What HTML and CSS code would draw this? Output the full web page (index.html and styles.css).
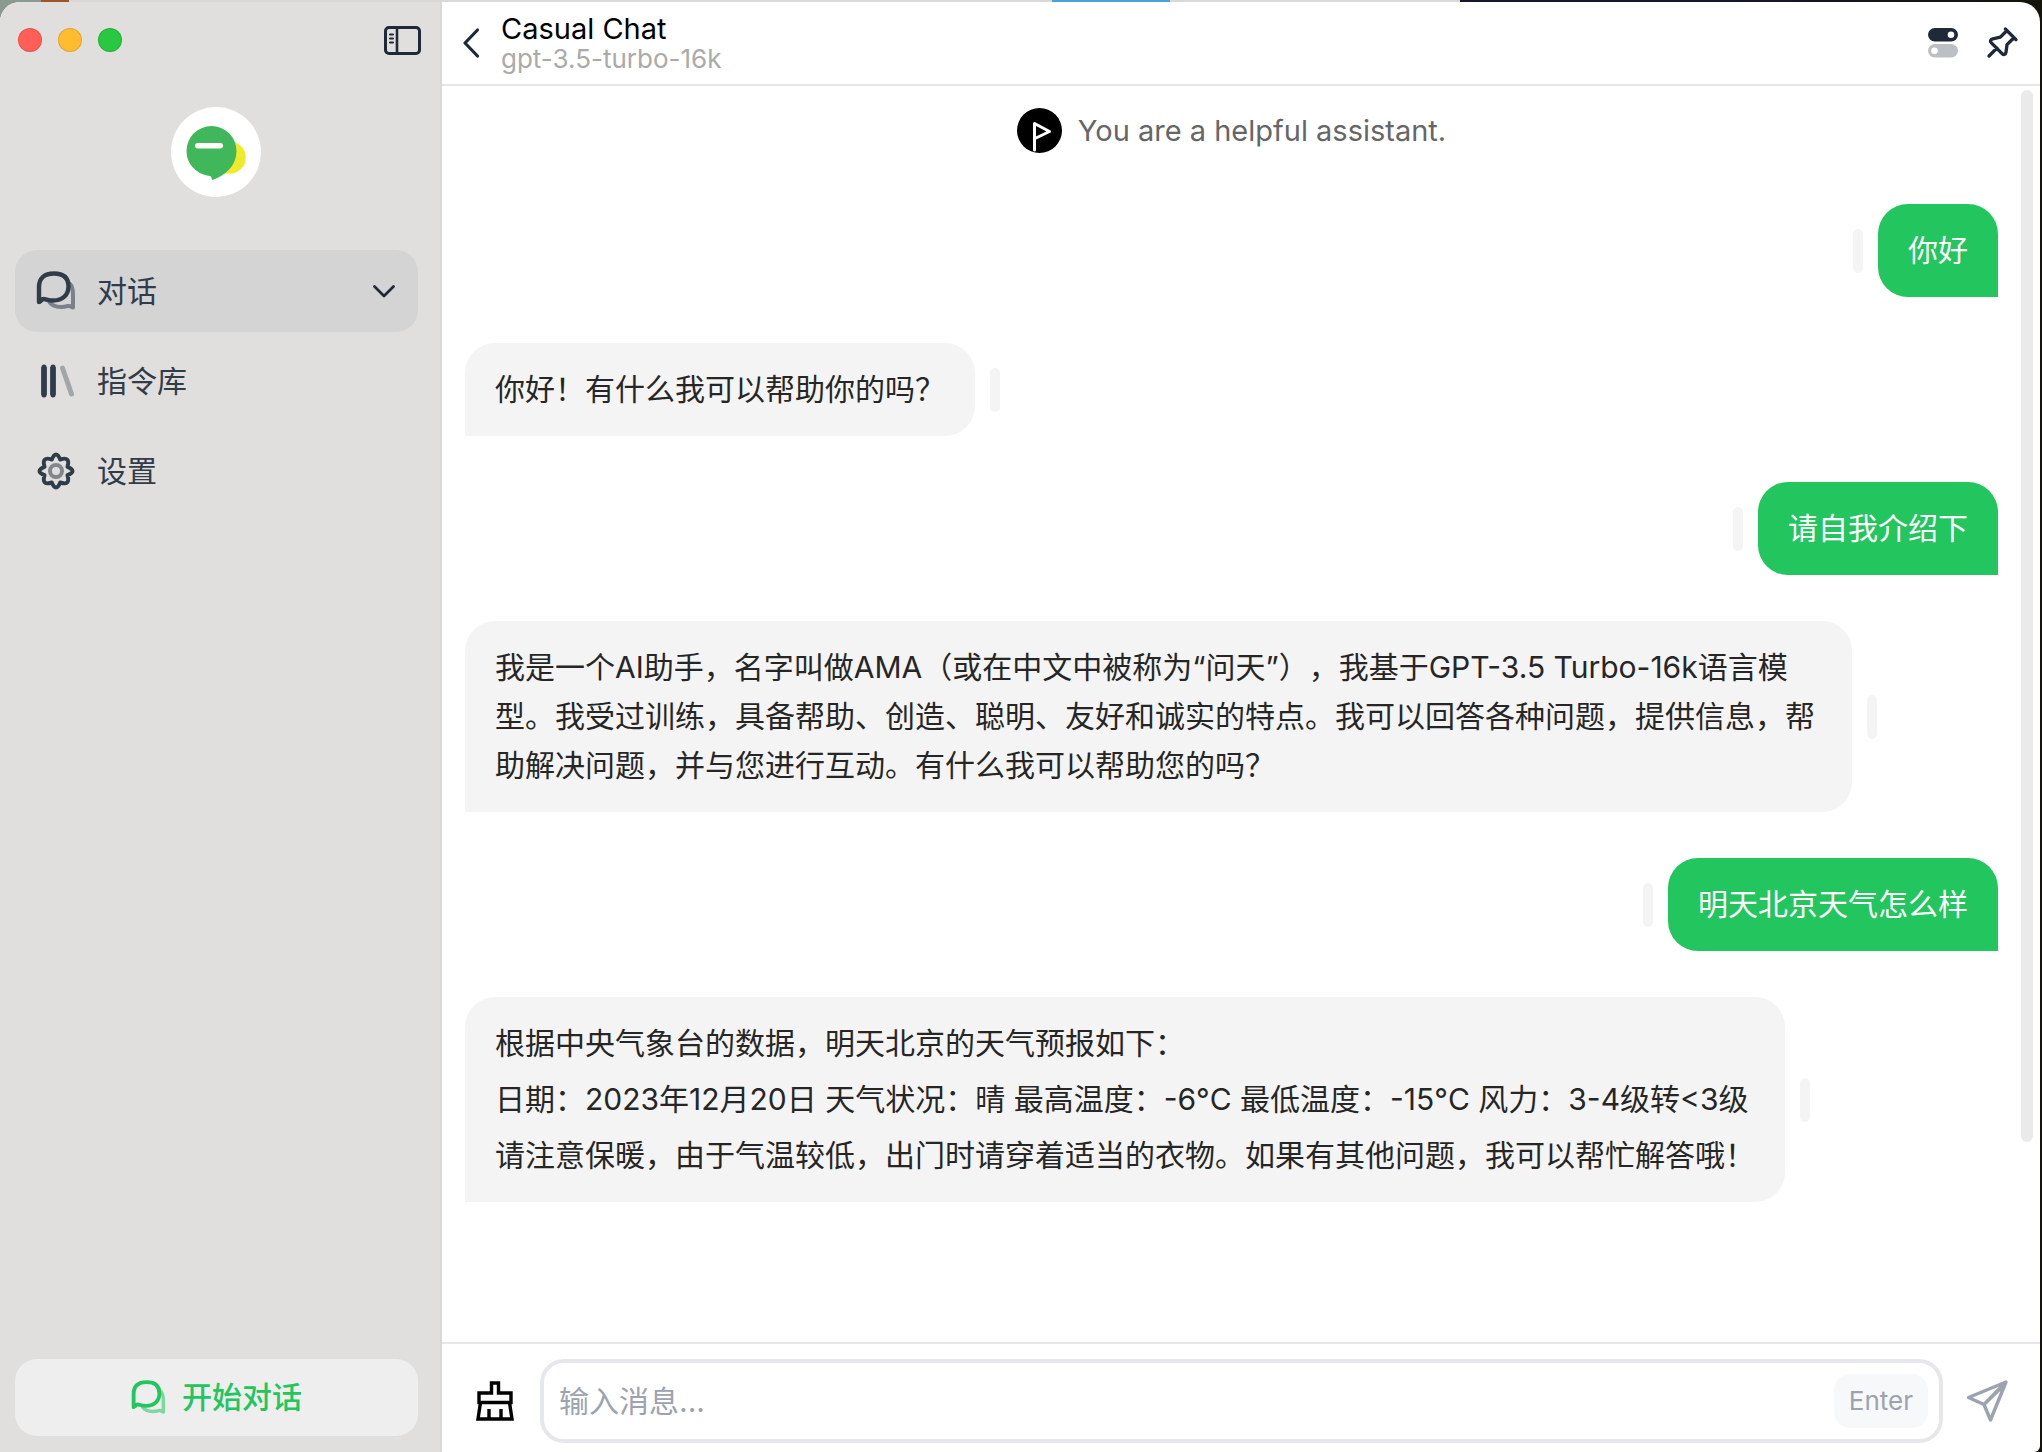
FILE: index.html
```html
<!DOCTYPE html>
<html lang="zh-CN">
<head>
<meta charset="utf-8">
<meta name="viewport" content="width=device-width, initial-scale=1">
<title>Casual Chat</title>
<link rel="stylesheet" href="styles.css">
</head>
<body>
<svg class="sprite" aria-hidden="true">
  <symbol id="icon-chat" viewBox="0 0 40 40">
    <path d="M34 13c3 3 3 6 3 10v13.500c-1.500 0-2-2-5-1.500-2 .5-4 1-7 1-6 0-10-2-12-5.500" fill="none" stroke="currentColor" stroke-width="4" stroke-linecap="round" stroke-linejoin="round" opacity=".55"/>
    <path d="M3 31V16C3 7.500 8 2.500 18 2.500S32.500 7.500 32.500 15.500 27 29.500 17 29.500c-5 0-7-1.500-9.500-1.500C5.500 28 4.500 31 3 31z" fill="none" stroke="currentColor" stroke-width="4.400" stroke-linecap="round" stroke-linejoin="round"/>
  </symbol>
</svg>
<div class="window">
  <aside class="sidebar">
    <div class="titlebar">
      <div class="lights">
        <button class="light light-close" aria-label="关闭"></button>
        <button class="light light-min" aria-label="最小化"></button>
        <button class="light light-max" aria-label="最大化"></button>
      </div>
      <button class="icon-button" aria-label="切换侧栏">
        <svg width="37" height="29" viewBox="0 0 37 29" fill="none" stroke="#1f2937" stroke-linecap="round">
          <rect x="1.500" y="1.500" width="34" height="26" rx="3.500" stroke-width="3"/>
          <path d="M13 2v25" stroke-width="2.600"/>
          <path d="M6 8.500h3M6 12.500h3M6 16.500h3" stroke-width="2"/>
        </svg>
      </button>
    </div>
    <div class="avatar">
      <svg width="90" height="90" viewBox="0 0 90 90">
        <circle cx="58.500" cy="50.500" r="16.300" fill="#f0ea2c"/>
        <path d="M40.500 19A25 25 0 0 1 65.500 44C65.500 58 55 68.500 41.500 73c-1-1-1-2-1.500-3.500-1-.6-2-.7-3-.8A25 25 0 0 1 15.500 44 25 25 0 0 1 40.500 19z" fill="#41b75b"/>
        <rect x="24" y="36" width="28" height="5.500" rx="2.700" fill="#fff"/>
      </svg>
    </div>
    <nav class="nav">
      <a class="nav-item nav-active" href="#chat">
        <svg class="nav-icon" width="40" height="40"><use href="#icon-chat"/></svg>
        <span class="nav-label">对话</span>
        <svg width="24" height="24" viewBox="0 0 24 24" fill="none" stroke="#1f2937" stroke-width="2.800" stroke-linecap="round" stroke-linejoin="round"><path d="M2.500 7.500L12 17l9.500-9.500"/></svg>
      </a>
      <a class="nav-item" href="#prompts">
        <svg class="nav-icon" width="40" height="40" viewBox="0 0 40 40" fill="none" stroke="currentColor" stroke-width="5" stroke-linecap="round">
          <path d="M8 6v28M17 6v28" stroke-width="5.500" stroke-linecap="butt"/>
          <path d="M8 6v28M17 6v28"/>
          <path d="M26.500 7L35.500 33" opacity=".35"/>
        </svg>
        <span class="nav-label">指令库</span>
      </a>
      <a class="nav-item" href="#settings">
        <svg class="nav-icon" width="40" height="40" viewBox="0 0 40 40" fill="none" stroke="currentColor" stroke-width="4" stroke-linejoin="round">
          <path d="M15.800 8.500Q20 -1.500 24.200 8.500Q34.600 5 31.500 15.800Q41.500 20 31.500 24.200Q34.600 35 24.200 31.500Q20 41.500 15.800 31.500Q5.400 35 8.500 24.200Q-1.500 20 8.500 15.800Q5.400 5 15.800 8.500z"/>
          <circle cx="20" cy="20" r="6" opacity=".55"/>
        </svg>
        <span class="nav-label">设置</span>
      </a>
    </nav>
    <button class="start">
      <svg width="35" height="35"><use href="#icon-chat"/></svg>
      <span>开始对话</span>
    </button>
  </aside>

  <main class="main">
    <header class="header">
      <button class="icon-button" aria-label="返回">
        <svg width="22" height="32" viewBox="0 0 22 32" fill="none" stroke="#1f2937" stroke-width="3.200" stroke-linecap="round" stroke-linejoin="round"><path d="M17.500 3L5 16l12.500 13"/></svg>
      </button>
      <div class="heading">
        <h1 class="title">Casual Chat</h1>
        <p class="model">gpt-3.5-turbo-16k</p>
      </div>
      <button class="icon-button" aria-label="选项">
        <svg width="30" height="30" viewBox="0 0 30 30">
          <rect width="30" height="13.500" rx="6.750" fill="#1f2937"/>
          <circle cx="23" cy="6.750" r="3.300" fill="#fff"/>
          <rect y="16" width="30" height="13.500" rx="6.750" fill="#bcbfc4"/>
          <circle cx="6.500" cy="22.750" r="3.300" fill="#fff"/>
        </svg>
      </button>
      <button class="icon-button" aria-label="置顶">
        <svg width="40" height="40" viewBox="0 0 24 24" fill="none" stroke="#1f2937" stroke-width="2" stroke-linecap="round" stroke-linejoin="round"><path d="M15 4.500l-4 4-4.500 1c-1.500.5-1.800 1.500-1 2.300l6.700 6.700c1 .8 2 .3 2.200-1l.6-4.500 4-4M9 15l-4.800 4.800M14 3.600l6.400 6.400"/></svg>
      </button>
    </header>

    <div class="body">
      <section class="messages">
        <div class="system">
          <svg width="45" height="45" viewBox="0 0 45 45">
            <circle cx="22.500" cy="22.500" r="22.500"/>
            <path d="M17.500 42V15.500L32.500 23.500 19 30" fill="none" stroke="#fff" stroke-width="3" stroke-linejoin="round" stroke-linecap="round"/>
          </svg>
          <span>You are a helpful assistant.</span>
        </div>
        <div class="row row-user"><div class="bubble">你好</div><span class="handle"></span></div>
        <div class="row"><div class="bubble">你好！有什么我可以帮助你的吗？</div><span class="handle"></span></div>
        <div class="row row-user"><div class="bubble">请自我介绍下</div><span class="handle"></span></div>
        <div class="row"><div class="bubble">我是一个AI助手，名字叫做AMA（或在中文中被称为“问天”），我基于GPT-3.5 Turbo-16k语言模型。我受过训练，具备帮助、创造、聪明、友好和诚实的特点。我可以回答各种问题，提供信息，帮助解决问题，并与您进行互动。有什么我可以帮助您的吗？</div><span class="handle"></span></div>
        <div class="row row-user"><div class="bubble">明天北京天气怎么样</div><span class="handle"></span></div>
        <div class="row"><div class="bubble">
          <p>根据中央气象台的数据，明天北京的天气预报如下：</p>
          <p>日期：2023年12月20日 天气状况：晴 最高温度：-6°C 最低温度：-15°C 风力：3-4级转&lt;3级</p>
          <p>请注意保暖，由于气温较低，出门时请穿着适当的衣物。如果有其他问题，我可以帮忙解答哦！</p>
        </div><span class="handle"></span></div>
      </section>
      <div class="scrollbar"><div class="thumb"></div></div>
    </div>

    <footer class="composer">
      <button class="icon-button" aria-label="清空对话">
        <svg width="44" height="44" viewBox="0 0 44 44" fill="none" stroke="#000" stroke-width="3.400">
          <path d="M18.500 14V4h7v10h12.500v9.500h-32V14zM7.500 23.500L5 40h34l-2.500-16.500M16 30v10M28 30v10"/>
        </svg>
      </button>
      <div class="field">
        <input class="input" type="text" placeholder="输入消息..." aria-label="输入消息">
        <kbd class="key">Enter</kbd>
      </div>
      <button class="icon-button" aria-label="发送">
        <svg width="44" height="44" viewBox="0 0 44 44" fill="none" stroke="#9ca3af" stroke-width="3.400" stroke-linejoin="round">
          <path d="M41 3L3.500 18.500 19 25.500 25.500 41zM19 25.500L41 3M19 25.500L38 7"/>
        </svg>
      </button>
    </footer>
  </main>
</div>
</body>
</html>
```
FILE: styles.css
```css
* {
  box-sizing: border-box;
}

body {
  margin: 0;
  padding: 2px 2px 0 0;
  min-height: 100vh;
  display: flex;
  background: linear-gradient(90deg, #8a9a90 0 2%, #a0522d 2% 3.4%, #d8d8d4 3.4% 51.5%, #4aa3d8 51.5% 57.3%, #d8d8d4 57.3% 71.5%, #15172a 71.5% 85%, #15140a 100%);
  font-family: Inter, "Noto Sans CJK SC", sans-serif;
  font-size: 30px;
  line-height: 49px;
  color: #262626;
  text-spacing-trim: space-all;
}

h1,
p {
  margin: 0;
}

button {
  font: inherit;
  border: 0;
  padding: 0;
  background: none;
  cursor: pointer;
}

svg {
  display: block;
  flex: none;
}

.sprite {
  position: absolute;
  width: 0;
  height: 0;
}

.window {
  flex: 1;
  min-width: 0;
  display: grid;
  grid-template-columns: 442px minmax(0, 1fr);
  background: #fff;
  border-radius: 20px 20px 6px 0;
  overflow: hidden;
}

/* Sidebar */
.sidebar {
  display: flex;
  flex-direction: column;
  padding: 20px 22px 16px 15px;
  background: #e0dfdd;
  border-right: 2px solid #d8d8d8;
}

.titlebar {
  display: flex;
  align-items: center;
  justify-content: space-between;
  height: 36px;
  margin-right: -3px;
  padding-left: 3px;
}

.lights {
  display: flex;
  gap: 16px;
}

.light {
  width: 24px;
  height: 24px;
  border-radius: 50%;
  border: 1px solid rgba(0, 0, 0, 0.12);
}

.light-close {
  background: #ff5f57;
}

.light-min {
  background: #febc2e;
}

.light-max {
  background: #28c840;
}

.icon-button {
  display: flex;
  flex: none;
}

.avatar {
  align-self: center;
  margin: 49px 2px 53px 0;
  border-radius: 50%;
  background: #fff;
}

.nav {
  display: flex;
  flex-direction: column;
  gap: 8px;
}

.nav-item {
  display: flex;
  align-items: center;
  height: 82px;
  padding: 0 22px 0 21px;
  border-radius: 22px;
  color: #313c49;
  text-decoration: none;
}

.nav-active {
  background: #d4d4d4;
}

.nav-icon {
  margin-right: 21px;
}

.nav-label {
  flex: 1;
}

.start {
  display: flex;
  align-items: center;
  justify-content: center;
  gap: 16px;
  height: 77px;
  margin-top: auto;
  border-radius: 22px;
  background: #eee;
  color: #22c55e;
  font-weight: 500;
}

/* Conversation */
.main {
  display: flex;
  flex-direction: column;
  min-width: 0;
}

.header {
  display: flex;
  align-items: center;
  height: 84px;
  padding: 0 18px;
  border-bottom: 2px solid #e5e7eb;
}

.heading {
  flex: 1;
  padding-left: 19px;
}

.title {
  font-size: 29px;
  font-weight: 400;
  line-height: 32px;
  color: #000;
}

.model {
  font-size: 26px;
  line-height: 28px;
  color: #aaa;
}

.header .icon-button:nth-last-child(2) {
  margin-right: 24px;
}

.body {
  flex: 1;
  display: flex;
}

.messages {
  flex: 1;
  min-width: 0;
  display: flex;
  flex-direction: column;
  gap: 46px;
  padding: 21px 23px 46px;
}

.system {
  display: flex;
  align-items: center;
  justify-content: center;
  gap: 16px;
  height: 46px;
  margin-bottom: 5px;
  font-size: 29px;
  color: #666;
}

.row {
  display: flex;
  align-items: center;
  gap: 15px;
}

.row-user {
  flex-direction: row-reverse;
}

.bubble {
  max-width: calc(100% - 146px);
  padding: 22px 30px;
  background: #f4f4f4;
  border-radius: 30px 30px 30px 0;
}

.bubble p + p {
  margin-top: 7px;
}

.row-user .bubble {
  background: #22c55e;
  color: #fff;
  border-radius: 30px 30px 0 30px;
}

.handle {
  flex: none;
  width: 10px;
  height: 44px;
  border-radius: 5px;
  background: #f4f4f4;
}

.scrollbar {
  width: 19px;
  padding: 4px 7px 0 0;
}

.thumb {
  height: 84%;
  border-radius: 6px;
  background: #eaeaea;
}

/* Composer */
.composer {
  display: flex;
  align-items: center;
  padding: 15px 31px 9px;
  border-top: 2px solid #e5e7eb;
}

.field {
  flex: 1;
  min-width: 0;
  display: flex;
  align-items: center;
  height: 84px;
  margin: 0 22px 0 23px;
  padding: 0 11px 0 15px;
  border: 4px solid #e5e7eb;
  border-radius: 24px;
}

.input {
  flex: 1;
  min-width: 0;
  border: 0;
  padding: 0;
  outline: 0;
  background: none;
  font: inherit;
  color: #262626;
}

.input::placeholder {
  color: #9ca3af;
  opacity: 1;
}

.key {
  padding: 0 15px;
  border-radius: 16px;
  background: #f7f8fa;
  color: #9ca3af;
  font-family: inherit;
  font-size: 26px;
  line-height: 54px;
}
```
